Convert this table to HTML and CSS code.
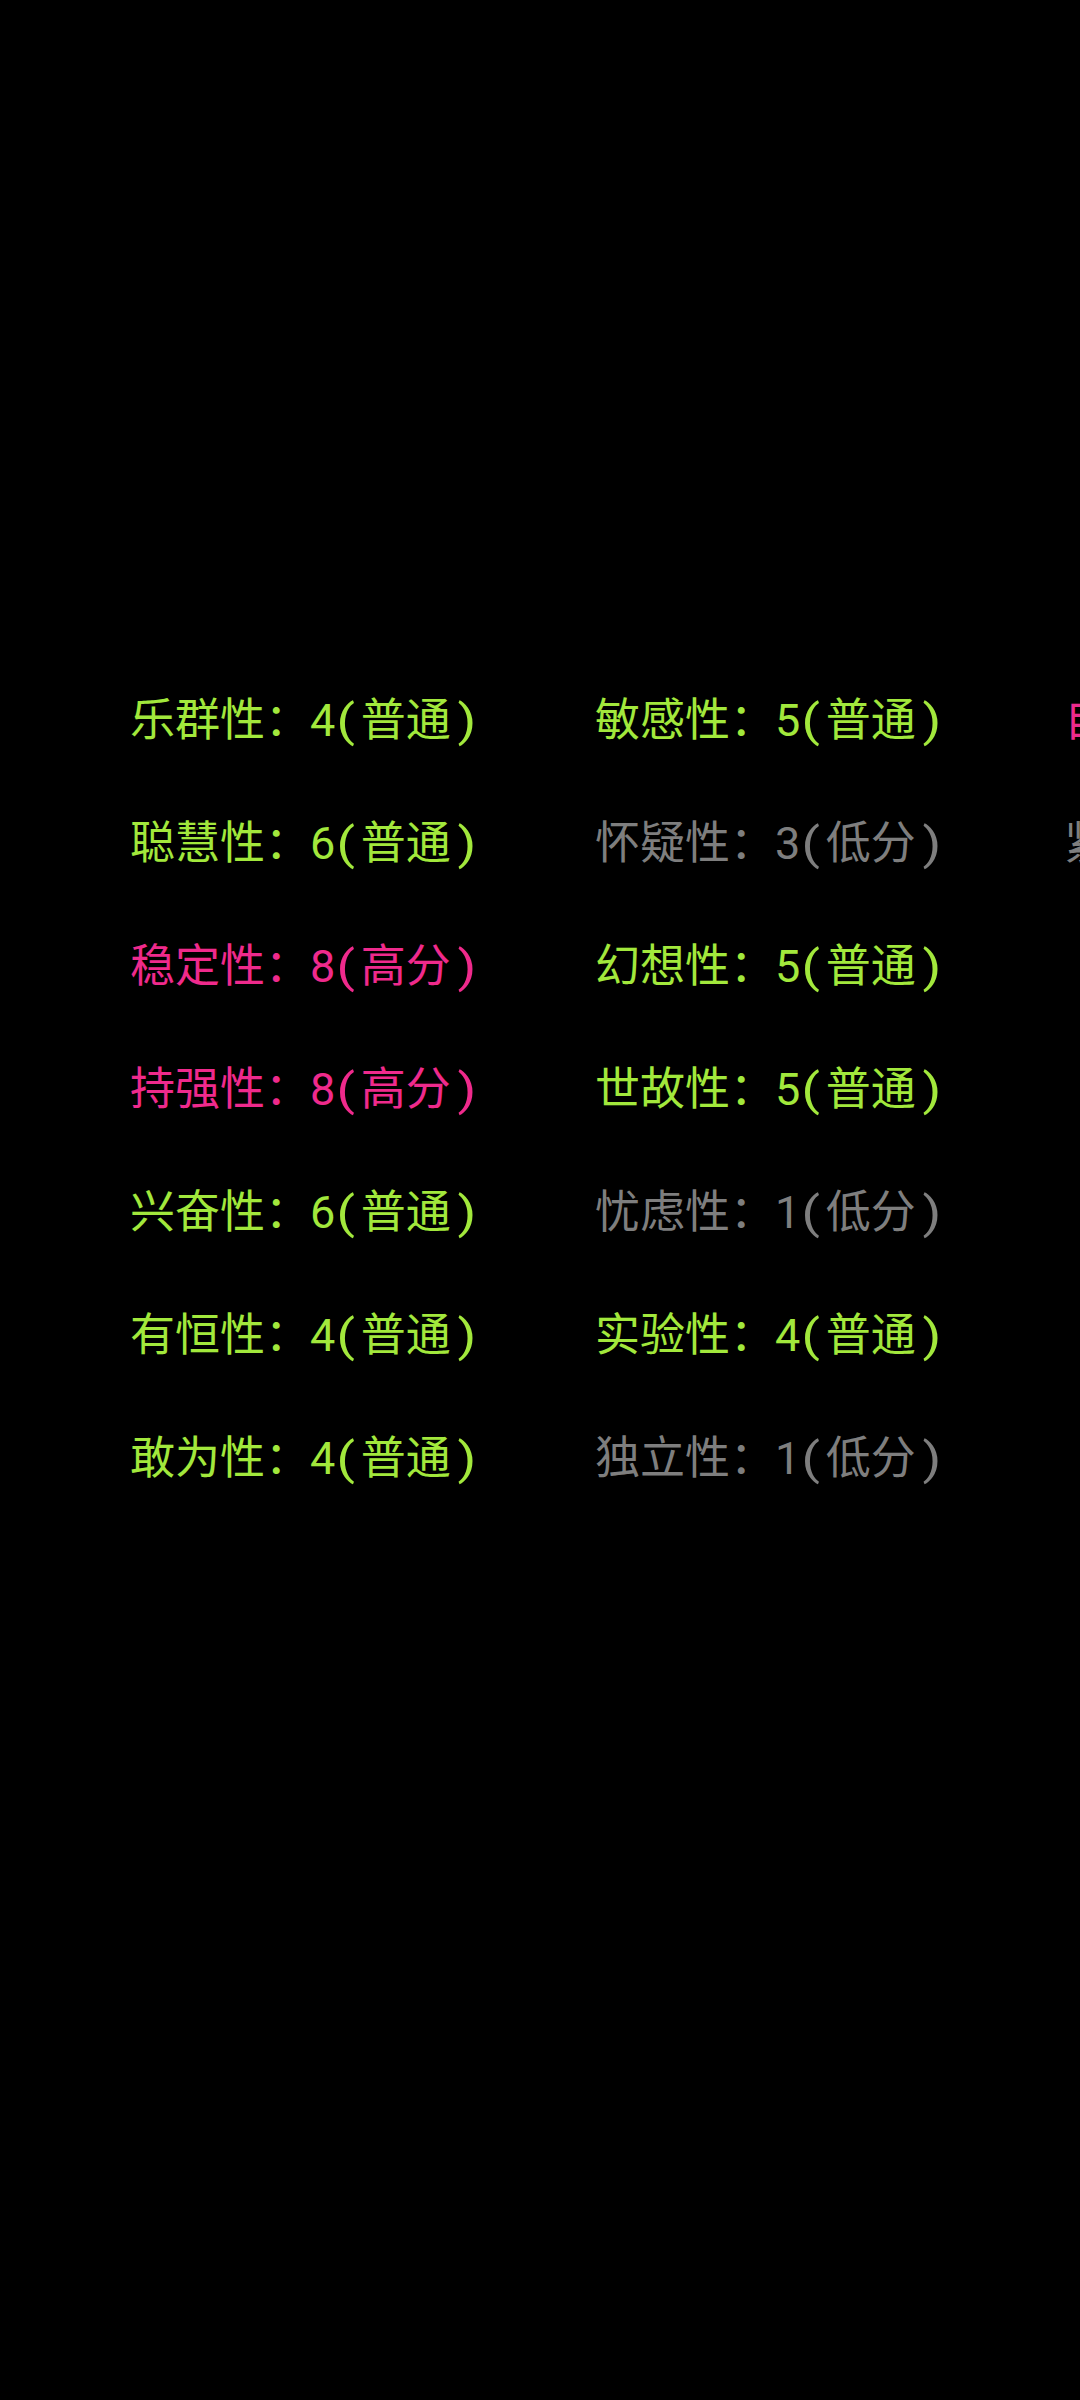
FILE: index.html
```html
<!DOCTYPE html>
<html lang="zh-CN">
<head>
<meta charset="utf-8">
<title>16PF</title>
<link rel="stylesheet" href="styles.css">
</head>
<body>
<div class="board">
  <div class="col">
    <div class="item mid">乐群性：4<span class="op">(</span>普通<span class="cp">)</span></div>
    <div class="item mid">聪慧性：6<span class="op">(</span>普通<span class="cp">)</span></div>
    <div class="item high">稳定性：8<span class="op">(</span>高分<span class="cp">)</span></div>
    <div class="item high">持强性：8<span class="op">(</span>高分<span class="cp">)</span></div>
    <div class="item mid">兴奋性：6<span class="op">(</span>普通<span class="cp">)</span></div>
    <div class="item mid">有恒性：4<span class="op">(</span>普通<span class="cp">)</span></div>
    <div class="item mid">敢为性：4<span class="op">(</span>普通<span class="cp">)</span></div>
  </div>
  <div class="col">
    <div class="item mid">敏感性：5<span class="op">(</span>普通<span class="cp">)</span></div>
    <div class="item low">怀疑性：3<span class="op">(</span>低分<span class="cp">)</span></div>
    <div class="item mid">幻想性：5<span class="op">(</span>普通<span class="cp">)</span></div>
    <div class="item mid">世故性：5<span class="op">(</span>普通<span class="cp">)</span></div>
    <div class="item low">忧虑性：1<span class="op">(</span>低分<span class="cp">)</span></div>
    <div class="item mid">实验性：4<span class="op">(</span>普通<span class="cp">)</span></div>
    <div class="item low">独立性：1<span class="op">(</span>低分<span class="cp">)</span></div>
  </div>
  <div class="col">
    <div class="item high">自律性：8<span class="op">(</span>高分<span class="cp">)</span></div>
    <div class="item low">紧张性：2<span class="op">(</span>低分<span class="cp">)</span></div>
  </div>
</div>
</body>
</html>
```
FILE: styles.css
```css
html, body {
  margin: 0;
  padding: 0;
  background: #000;
  width: 1080px;
  height: 2400px;
  overflow: hidden;
}
.board {
  display: grid;
  grid-template-columns: 465px 469px 468px;
  padding: 659px 0 0 130px;
  font-family: Roboto, "Noto Sans CJK SC", sans-serif;
  font-size: 45px;
  white-space: nowrap;
}
.col {
  display: flex;
  flex-direction: column;
}
.item {
  line-height: 123px;
  height: 123px;
}
.op {
  display: inline-block;
  transform: scaleX(1.2);
  margin: 0 7px 0 3px;
}
.cp {
  display: inline-block;
  transform: scaleX(1.2);
  margin-left: 8px;
}
.mid { color: #a2e83c; }
.high { color: #ef2a8c; }
.low { color: #7e7e7e; }
```
